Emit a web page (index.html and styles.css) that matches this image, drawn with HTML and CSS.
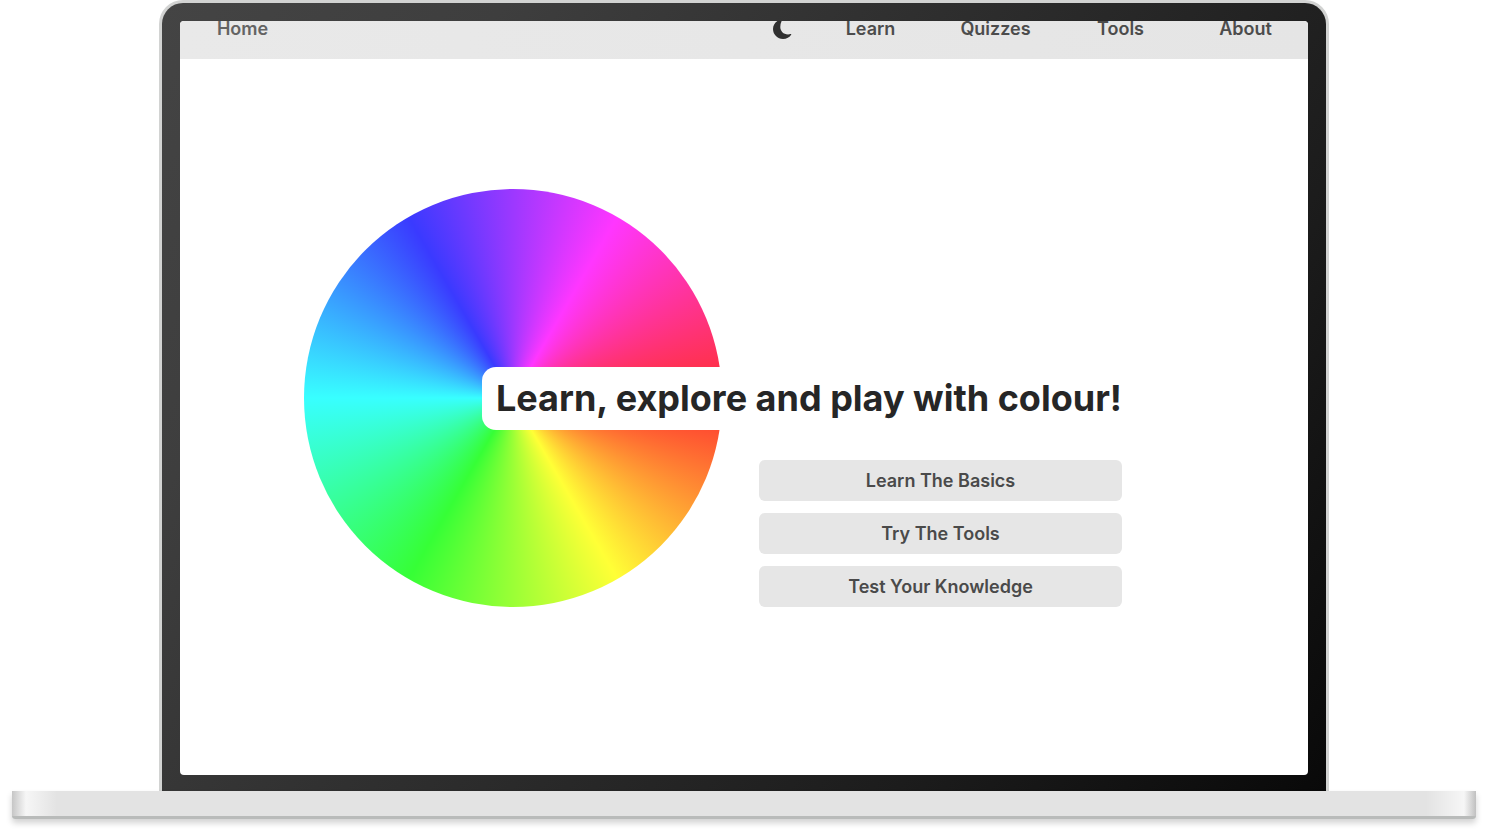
FILE: index.html
```html
<!DOCTYPE html>
<html lang="en">
<head>
<meta charset="utf-8">
<meta name="viewport" content="width=device-width, initial-scale=1">
<title>Colour</title>
<link rel="stylesheet" href="styles.css">
</head>
<body>
<div class="laptop">
  <div class="lid">
    <div class="screen">
      <nav class="nav" aria-label="Main">
        <a class="nav-link nav-home" href="#home">Home</a>
        <button class="theme" type="button" aria-label="Dark mode">
          <svg class="moon" viewBox="0 0 20 20" aria-hidden="true"><path d="M8 .5C3.300 1.500 0 5.300 0 10C0 15.500 4.500 20 10 20C13.600 20 16.600 18.300 18.300 15.500Q18.500 14.900 17.600 15.100C11.500 16.600 7.300 12.700 7.300 8Q7.300 4.300 9 1.300Q9.300 .300 8 .500Z"/></svg>
        </button>
        <a class="nav-link" href="#learn">Learn</a>
        <a class="nav-link" href="#quizzes">Quizzes</a>
        <a class="nav-link" href="#tools">Tools</a>
        <a class="nav-link" href="#about">About</a>
      </nav>
      <main class="hero">
        <div class="wheel"></div>
        <h1 class="headline">Learn, explore and play with colour!</h1>
        <div class="actions">
          <button class="action" type="button">Learn The Basics</button>
          <button class="action" type="button">Try The Tools</button>
          <button class="action" type="button">Test Your Knowledge</button>
        </div>
      </main>
    </div>
  </div>
  <div class="base"></div>
</div>
</body>
</html>
```

FILE: styles.css
```css
* { box-sizing: border-box; }

body {
  margin: 0;
  background: #fff;
  font-family: Inter, "Liberation Sans", sans-serif;
}

.laptop {
  display: flex;
  flex-direction: column;
  min-height: 100vh;
  padding: 0 12px 12px;
}

.lid {
  flex: 1;
  display: flex;
  margin: 0 147px;
  padding: 18px 18px 16px;
  border: 3px solid #d2d3d2;
  border-bottom: 0;
  border-radius: 24px 24px 0 0;
  background: linear-gradient(125deg, #444 0%, #3e3e3e 20%, #1c1c1c 75%, #090909 100%);
}

.screen {
  flex: 1;
  display: grid;
  grid-template-rows: 38px 1fr;
  overflow: hidden;
  border-radius: 4px;
  background: #fff;
}

.nav {
  grid-area: 1 / 1;
  display: flex;
  background: linear-gradient(90deg, #e9e9e9, #e5e5e5);
}

.nav-link {
  width: 125px;
  padding-bottom: 22px;
  display: flex;
  align-items: center;
  justify-content: center;
  color: #4c4c4c;
  font-size: 18px;
  font-weight: 600;
  line-height: 16px;
  text-decoration: none;
}

.nav-home {
  margin-right: auto;
  color: #646464;
}

.theme {
  width: 50px;
  padding: 0 0 22px;
  border: 0;
  background: none;
  display: flex;
  align-items: center;
  justify-content: center;
}

.moon {
  flex: none;
  width: 20px;
  height: 20px;
  fill: #303030;
}

.hero {
  grid-area: 1 / 1 / 3 / 2;
  align-self: center;
  display: grid;
  grid-template-columns: 418px 400px;
  grid-template-rows: 1fr auto 1fr;
  justify-content: center;
  padding-right: 62px;
}

.wheel {
  grid-area: 1 / 1 / 4 / 2;
  aspect-ratio: 1;
  border-radius: 50%;
  background: conic-gradient(from 90deg, #ff3030, #ffff36, #36ff36, #38ffff, #3a3aff, #ff36ff, #ff3030);
}

.headline {
  grid-area: 2 / 1 / 3 / 3;
  justify-self: end;
  margin: 0;
  padding: 0 0 0 14px;
  border-radius: 14px 0 0 14px;
  background: #fff;
  font-size: 36px;
  font-weight: 700;
  line-height: 63px;
  white-space: nowrap;
  color: #262626;
}

.actions {
  grid-area: 3 / 2;
  align-self: end;
  justify-self: end;
  width: 363px;
  display: grid;
  gap: 12px;
}

.action {
  height: 41px;
  padding: 0;
  border: 0;
  border-radius: 6px;
  background: #e6e6e6;
  color: #4a4a4a;
  font: 600 18px/24px Inter, "Liberation Sans", sans-serif;
}

.base {
  height: 28px;
  border-bottom: 3px solid #b9bbba;
  border-radius: 0 0 3px 3px;
  background: linear-gradient(90deg, #c6c6c6 0, #f6f6f6 14px, #e3e3e3 45px, #e3e3e3 calc(100% - 50px), #f6f6f6 calc(100% - 12px), #c0c0c0 100%);
  box-shadow: 0 4px 6px #0000002e;
}
```
